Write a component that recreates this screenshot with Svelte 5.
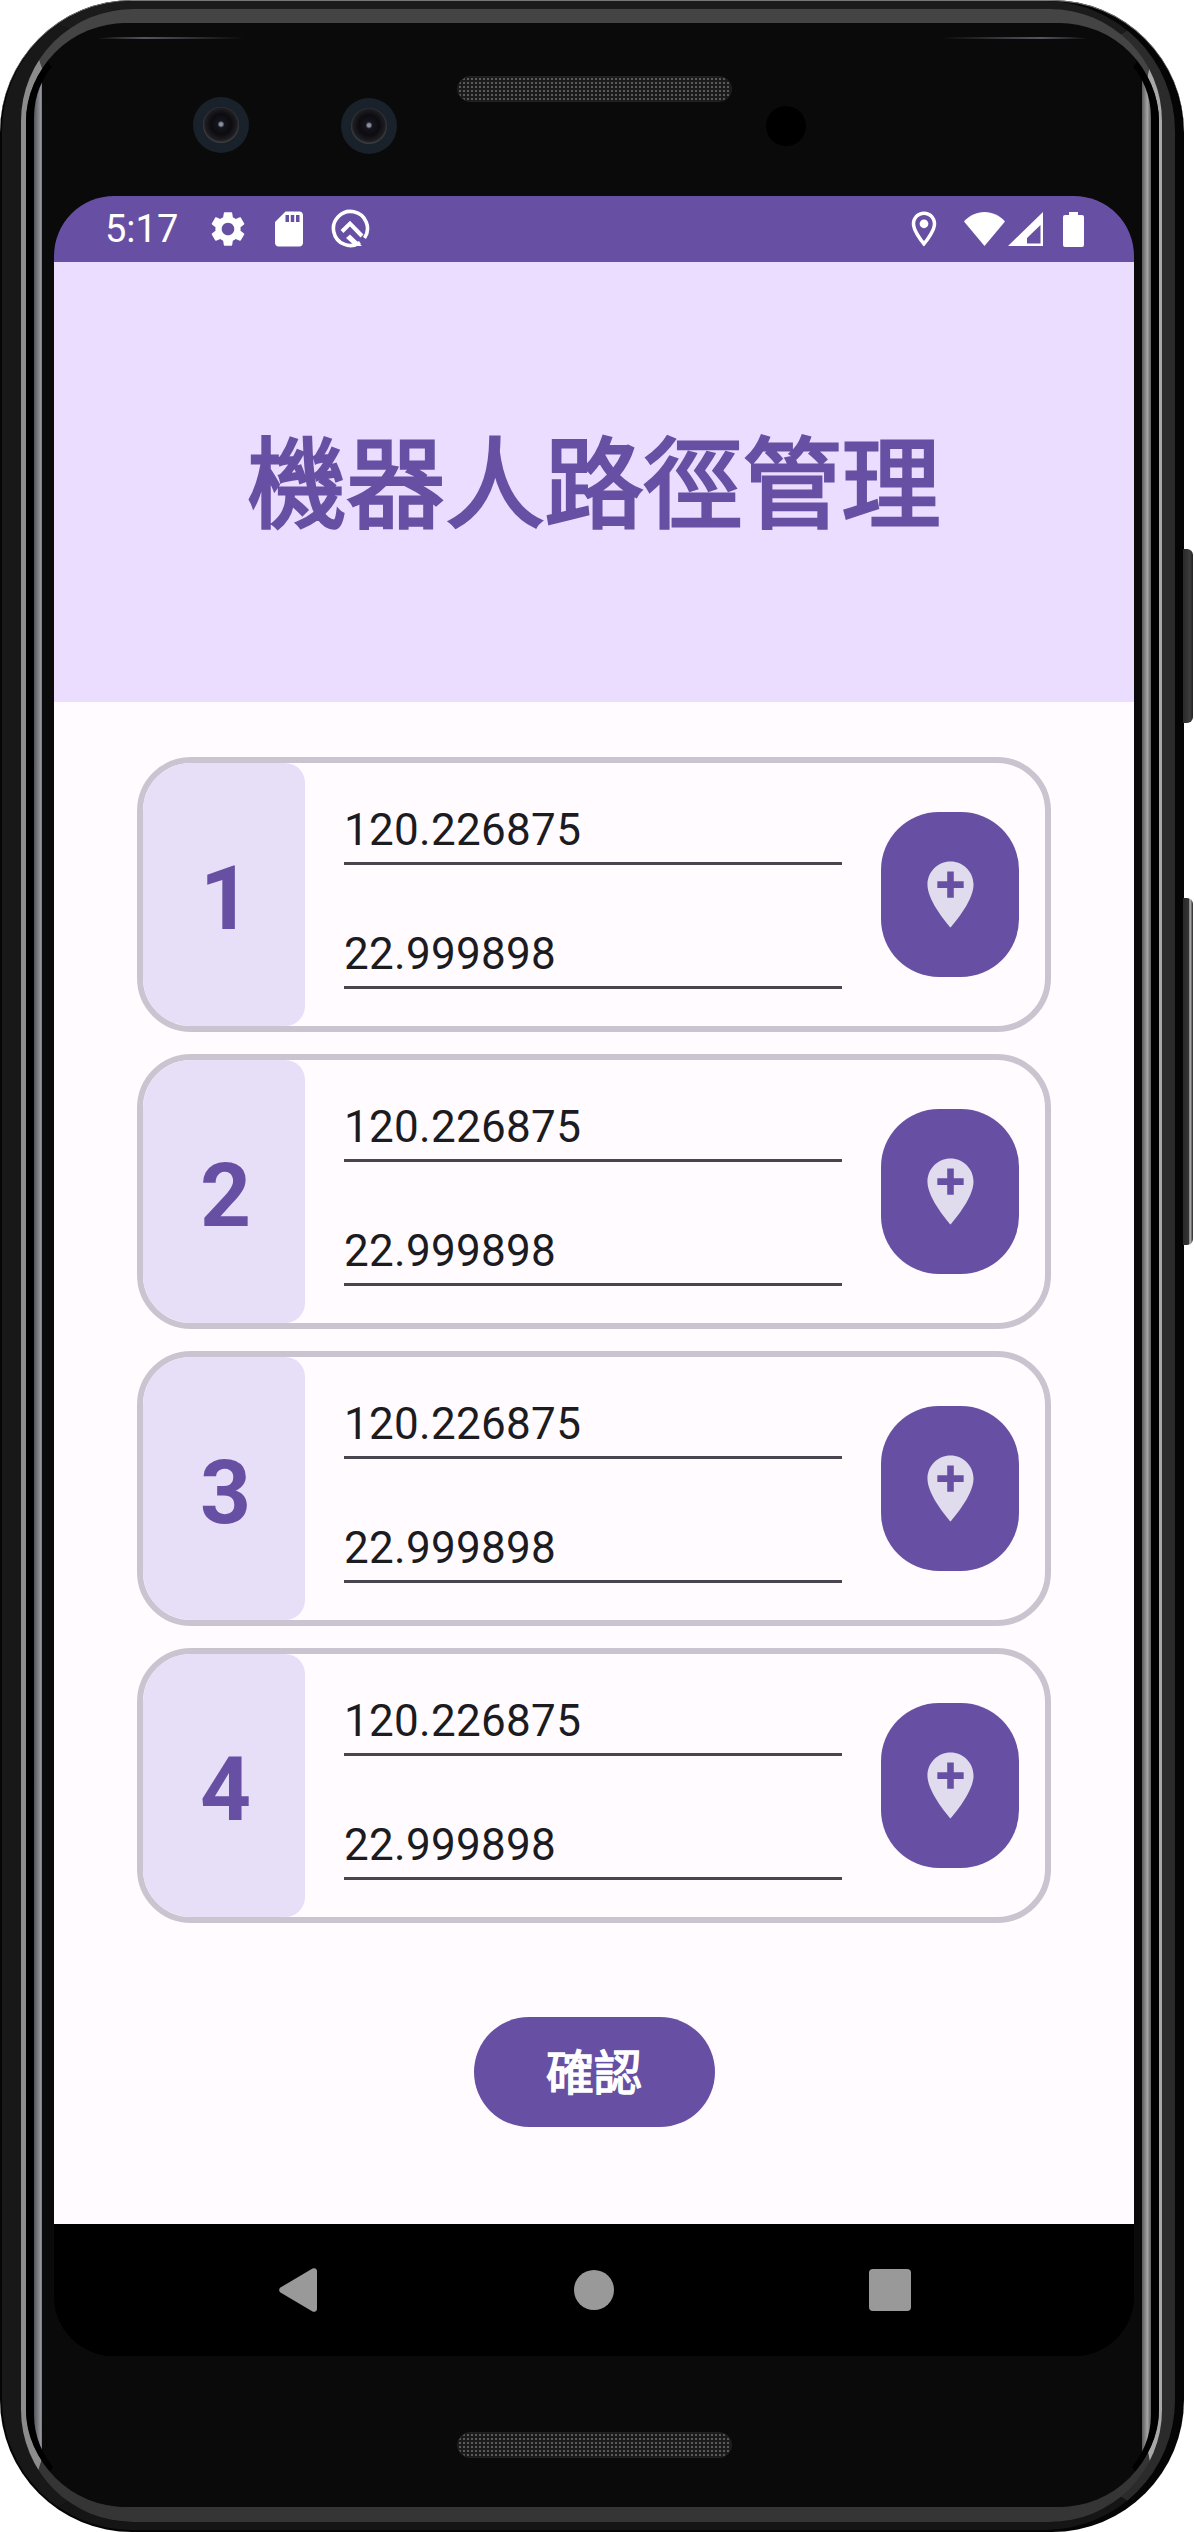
<script lang="ts">
    const points = [1, 2, 3, 4].map((id) => ({
        id,
        lng: "120.226875",
        lat: "22.999898",
    }));
</script>

<div class="phone">
    <div class="btn-power"></div>
    <div class="btn-volume"></div>
    <div class="rim">
        <div class="band">
            <div class="groove">
                <div class="gloss">
                    <div class="face">
                        <div class="bezel-top">
                            <div class="camera"><div class="lens"></div></div>
                            <div class="camera cam2"><div class="lens"></div></div>
                            <div class="speaker"></div>
                            <div class="sensor"></div>
                        </div>

                        <div class="screen">
                            <div class="status">
                                <span class="time">5:17</span>
                                <svg class="ic gear" viewBox="0 0 24 24"><path d="M19.14 12.94c.04-.3.06-.61.06-.94 0-.32-.02-.64-.07-.94l2.03-1.58c.18-.14.23-.41.12-.61l-1.92-3.32c-.12-.22-.37-.29-.59-.22l-2.39.96c-.5-.38-1.03-.7-1.62-.94l-.36-2.54c-.04-.24-.24-.41-.48-.41h-3.84c-.24 0-.43.17-.47.41l-.36 2.54c-.59.24-1.13.57-1.62.94l-2.39-.96c-.22-.08-.47 0-.59.22L2.74 8.87c-.12.21-.08.47.12.61l2.03 1.58c-.05.3-.09.63-.09.94s.02.64.07.94l-2.03 1.58c-.18.14-.23.41-.12.61l1.92 3.32c.12.22.37.29.59.22l2.39-.96c.5.38 1.03.7 1.62.94l.36 2.54c.05.24.24.41.48.41h3.84c.24 0 .44-.17.47-.41l.36-2.54c.59-.24 1.13-.56 1.62-.94l2.39.96c.22.08.47 0 .59-.22l1.92-3.32c.12-.22.07-.47-.12-.61l-2.01-1.58zM12 15.6c-1.98 0-3.6-1.62-3.6-3.6s1.62-3.6 3.6-3.6 3.6 1.62 3.6 3.6-1.62 3.6-3.6 3.6z" /></svg>
                                <svg class="ic sd" viewBox="0 0 24 24"><path d="M18 2h-8L4.02 8 4 20c0 1.1.9 2 2 2h12c1.1 0 2-.9 2-2V4c0-1.1-.9-2-2-2zm-6 6h-2V4h2v4zm3 0h-2V4h2v4zm3 0h-2V4h2v4z" /></svg>
                                <svg class="q" viewBox="0 0 39 39">
                                    <path class="q-ring" d="M29 33.500A17 17 0 1 1 33.500 29" />
                                    <path class="q-roof" d="M11 22.500L19 14.500 31 27" />
                                    <path class="q-tail" d="M19 25.500l12 11.500h-7l-9-8z" />
                                </svg>

                                <div class="status-right">
                                    <svg class="ic pin" viewBox="0 0 24 24"><path d="M12 2C8.13 2 5 5.13 5 9c0 5.25 7 13 7 13s7-7.75 7-13c0-3.87-3.13-7-7-7zM7 9c0-2.76 2.24-5 5-5s5 2.24 5 5c0 2.88-2.88 7.19-5 9.88C9.92 16.21 7 11.85 7 9z" /><circle cx="12" cy="9" r="2.5" /></svg>
                                    <svg class="wifi" viewBox="0 0 41 34"><path d="M0 9.500C5.500 3.500 12.500 0 20.500 0S35.500 3.500 41 9.500L20.500 34z" /></svg>
                                    <svg class="signal" viewBox="0 0 35 34"><path fill-rule="evenodd" d="M0 34L35 0v34zM19 31.500h13.500V13L19 26z" /></svg>
                                    <svg class="battery" viewBox="0 0 21 35"><path d="M6 0h9v3h4a2 2 0 0 1 2 2v28a2 2 0 0 1-2 2H2a2 2 0 0 1-2-2V5a2 2 0 0 1 2-2h4z" /></svg>
                                </div>
                            </div>

                            <header class="hero">
                                <h1>機器人路徑管理</h1>
                            </header>

                            <main class="content">
                                <div class="list">
                                    {#each points as p (p.id)}
                                        <div class="card">
                                            <div class="num">{p.id}</div>
                                            <div class="fields">
                                                <div class="field">{p.lng}</div>
                                                <div class="field">{p.lat}</div>
                                            </div>
                                            <div class="pick">
                                                <svg viewBox="0 0 24 24"><path d="M12 2C8.14 2 5 5.14 5 9c0 5.25 7 13 7 13s7-7.75 7-13c0-3.86-3.14-7-7-7zm4 8h-3v3h-2v-3H8V8h3V5h2v3h3v2z" /></svg>
                                            </div>
                                        </div>
                                    {/each}
                                </div>
                                <div class="confirm">確認</div>
                            </main>

                            <nav class="nav">
                                <div class="nav-cell">
                                    <svg class="nav-back" viewBox="0 0 38 44"><path d="M1.500 24.500a3 3 0 0 1 0-5L33.500.600a3 3 0 0 1 4.500 2.500v37.800a3 3 0 0 1-4.500 2.500z" /></svg>
                                </div>
                                <div class="nav-cell"><div class="nav-home"></div></div>
                                <div class="nav-cell"><div class="nav-recent"></div></div>
                            </nav>
                        </div>

                        <div class="bezel-bottom">
                            <div class="speaker"></div>
                        </div>
                    </div>
                </div>
            </div>
        </div>
    </div>
</div>

<style>
    :global(body) {
        margin: 0;
        background: #fff;
    }

    .phone {
        position: relative;
        box-sizing: border-box;
        width: 1184px;
        height: 2532px;
        padding: 1px 9px 2px 2px;
        background: #050505;
        border-radius: 132px;
        box-shadow: inset 0 1px 0 #777;
        font-family: Roboto, "Noto Sans CJK TC", sans-serif;
    }

    .btn-power,
    .btn-volume {
        position: absolute;
        left: 1183px;
        width: 10px;
        background: #333;
        border-radius: 0 6px 6px 0;
    }
    .btn-power {
        top: 549px;
        height: 174px;
        background: linear-gradient(90deg, #2a2a2a, #3c3c3c 70%, #222);
    }
    .btn-volume {
        top: 898px;
        height: 347px;
        background: linear-gradient(90deg, #2a2a2a, #333 55%, #bbb 70%, #222);
    }

    .rim,
    .band,
    .groove,
    .gloss,
    .face {
        box-sizing: border-box;
        height: 100%;
    }

    .rim {
        border-style: solid;
        border-width: 8px 13px 8px 19px;
        border-color: #1b1b1b #2b2b2b #151515 #181818;
        border-radius: 130px;
    }
    .band {
        border-style: solid;
        border-width: 14px 3px 15px 5px;
        border-color: #444 #a8a8a8 #353535 #8c8c8c;
        border-radius: 112px;
    }
    .groove {
        border-style: solid;
        border-width: 14px 8px 12px 8px;
        border-color: #0a0a0a #000 #0a0a0a #000;
        border-radius: 100px;
    }
    .gloss {
        padding: 2px 9px 2px 8px;
        border-radius: 80px;
        background:
            linear-gradient(90deg, #55555c, #9a9aa2 90%, #55555c) left / 8px 100% no-repeat,
            linear-gradient(90deg, #5c5c5c, #a4a4a4 60%, #5c5c5c) right / 9px 100% no-repeat,
            linear-gradient(90deg, #0a0a0a 60px, #55555f 110px, #0a0a0a 210px) left top / 230px 2px no-repeat,
            linear-gradient(270deg, #0a0a0a 60px, #55555f 110px, #0a0a0a 210px) right top / 230px 2px no-repeat,
            #0a0a0a;
    }
    .face {
        display: flex;
        flex-direction: column;
        background: #0a0a0a;
        border-radius: 76px;
    }

    .bezel-top {
        display: flex;
        align-items: flex-start;
        height: 157px;
        padding-left: 151px;
        box-sizing: border-box;
        flex-shrink: 0;
    }
    .camera {
        display: flex;
        align-items: center;
        justify-content: center;
        width: 56px;
        height: 56px;
        margin-top: 58px;
        border-radius: 50%;
        background: #19222a;
    }
    .cam2 {
        margin-top: 59px;
        margin-left: 92px;
    }
    .lens {
        width: 36px;
        height: 36px;
        border-radius: 50%;
        background: radial-gradient(circle at 50% 48%, #8a90a0 0 1.500px, #14141c 3.500px, #0c0c10 10px, #1e1e22 16px, #3c3c40 18px);
    }
    .speaker {
        width: 275px;
        height: 26px;
        border-radius: 13px;
        box-sizing: border-box;
        border: 1px solid #222;
        background: radial-gradient(circle, #5a5a5a 0 1px, #1a1a1a 1.600px) 0 0 / 4px 4px;
    }
    .bezel-top .speaker {
        margin-top: 37px;
        margin-left: 60px;
    }
    .sensor {
        width: 40px;
        height: 40px;
        margin-top: 67px;
        margin-left: 34px;
        border-radius: 50%;
        background: #000;
    }

    .screen {
        display: flex;
        flex-direction: column;
        flex-shrink: 0;
        height: 2160px;
        margin: 0 8px 0 12px;
        border-radius: 60px;
        overflow: hidden;
        background: #000;
    }

    .status {
        display: flex;
        align-items: center;
        height: 66px;
        padding: 0 50px 0 51px;
        background: #6750a4;
        color: #fff;
        flex-shrink: 0;
    }
    .time {
        font-size: 38px;
        line-height: 66px;
        width: 72px;
    }
    .status svg {
        fill: #fff;
        flex-shrink: 0;
    }
    .ic {
        width: 42px;
        height: 42px;
    }
    .gear {
        margin-left: 30px;
    }
    .sd {
        margin-left: 19px;
    }
    .q {
        width: 39px;
        height: 39px;
        margin-left: 21px;
        margin-top: -2px;
    }
    .status .q-ring {
        fill: none;
        stroke: #fff;
        stroke-width: 3.6;
    }
    .status .q-roof {
        fill: none;
        stroke: #fff;
        stroke-width: 4;
    }
    .status-right {
        display: flex;
        align-items: center;
        margin-left: auto;
    }
    .wifi {
        width: 41px;
        height: 34px;
        margin-left: 19px;
    }
    .signal {
        width: 35px;
        height: 34px;
        margin-left: 3px;
    }
    .battery {
        width: 21px;
        height: 35px;
        margin-left: 20px;
    }

    .hero {
        display: flex;
        align-items: center;
        justify-content: center;
        height: 440px;
        background: #eaddff;
        flex-shrink: 0;
    }
    /* the reference is a regular weight with fake bold, hence the stroke */
    h1 {
        margin: 0 0 10px;
        font-family: "Noto Sans CJK TC", sans-serif;
        font-size: 99px;
        font-weight: 400;
        line-height: 1.2;
        color: #6750a4;
        -webkit-text-stroke: 3px #6750a4;
    }

    .content {
        flex: 1;
        display: flex;
        flex-direction: column;
        align-items: center;
        padding-top: 55px;
        background: #fffbfe;
    }
    .list {
        display: flex;
        flex-direction: column;
        gap: 22px;
    }

    .card {
        display: flex;
        box-sizing: border-box;
        width: 914px;
        height: 275px;
        border: 6px solid #cac4d0;
        border-radius: 54px;
        overflow: hidden;
    }
    .num {
        display: flex;
        align-items: center;
        justify-content: center;
        box-sizing: border-box;
        width: 162px;
        padding: 8px 0 0 3px;
        flex-shrink: 0;
        background: #e7dff8;
        border-radius: 0 20px 20px 0;
        font-size: 89px;
        font-weight: 700;
        color: #6750a4;
    }
    .fields {
        display: flex;
        flex-direction: column;
        gap: 63px;
        width: 498px;
        margin-left: 39px;
        padding-top: 41px;
    }
    .field {
        padding-bottom: 6px;
        border-bottom: 3px solid #49454f;
        font-size: 44px;
        line-height: 52px;
        letter-spacing: 0.3px;
        color: #1c1b1f;
    }
    .pick {
        display: flex;
        align-items: center;
        justify-content: center;
        align-self: center;
        width: 138px;
        height: 165px;
        margin-left: 39px;
        border-radius: 58px;
        background: #6750a4;
    }
    .pick svg {
        width: 79px;
        height: 79px;
        fill: #e0dcee;
    }

    .confirm {
        display: flex;
        align-items: center;
        justify-content: center;
        box-sizing: border-box;
        width: 241px;
        height: 110px;
        margin-top: 94px;
        padding-bottom: 6px;
        border-radius: 55px;
        background: #6750a4;
        color: #fff;
        font-family: "Noto Sans CJK TC", sans-serif;
        font-size: 48px;
        font-weight: 400;
        -webkit-text-stroke: 1.500px #fff;
    }

    .nav {
        display: flex;
        justify-content: center;
        height: 132px;
        background: #000;
        flex-shrink: 0;
    }
    .nav-cell {
        display: flex;
        align-items: center;
        justify-content: center;
        width: 296px;
    }
    .nav-back {
        width: 38px;
        height: 44px;
        fill: #999;
    }
    .nav-home {
        width: 40px;
        height: 40px;
        border-radius: 50%;
        background: #999;
    }
    .nav-recent {
        width: 42px;
        height: 42px;
        border-radius: 4px;
        background: #999;
    }

    .bezel-bottom {
        display: flex;
        justify-content: center;
        padding-top: 76px;
        padding-left: 5px;
    }
</style>
